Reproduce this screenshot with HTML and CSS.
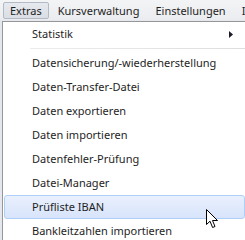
FILE: index.html
```html
<!DOCTYPE html>
<html lang="de">
<head>
    <meta charset="UTF-8">
    <title>Extras</title>
    <link rel="stylesheet" href="styles.css">
</head>
<body>
    <div class="menubar">
        <span class="bar-item active">Extras</span>
        <span class="bar-item">Kursverwaltung</span>
        <span class="bar-item">Einstellungen</span>
        <span class="bar-item">I</span>
    </div>

    <div class="dropdown">
        <div class="item sub">Statistik
            <svg class="arrow" width="4" height="7" viewBox="0 0 4 7"><path d="M0 0 L4 3.5 L0 7 Z" fill="#1b1b2a"/></svg>
        </div>
        <div class="sep"></div>
        <div class="item">Datensicherung/-wiederherstellung</div>
        <div class="item">Daten-Transfer-Datei</div>
        <div class="item">Daten exportieren</div>
        <div class="item">Daten importieren</div>
        <div class="item">Datenfehler-Prüfung</div>
        <div class="item">Datei-Manager</div>
        <div class="item hover">Prüfliste IBAN
            <svg class="cursor" width="13" height="20" viewBox="0 0 13 20">
                <path d="M0.5 0.5 L0.5 15.5 L4 12.2 L6.6 18.5 L9 17.5 L6.5 11.5 L11.5 11.5 Z" fill="#fff" stroke="#000" stroke-width="1"/>
            </svg>
        </div>
        <div class="item">Bankleitzahlen importieren</div>
    </div>
</body>
</html>
```
FILE: styles.css
```css
* {
    box-sizing: border-box;
}

body {
    margin: 0;
    height: 240px;
    background-color: #e4e8ee;
    font-family: "Noto Sans", "Open Sans", sans-serif;
    font-size: 11px;
    color: #1e1e1e;
    overflow: hidden;
}

.menubar {
    height: 20px;
    display: flex;
    align-items: center;
    padding-left: 3px;
    background: linear-gradient(#f3f4f6, #eaecef);
    white-space: nowrap;
    overflow: hidden;
}

.bar-item {
    height: 17px;
    line-height: 15px;
    padding: 0 6px;
    margin-right: 2px;
    border: 1px solid transparent;
    border-radius: 2px;
}

.bar-item.active {
    background: linear-gradient(#e6e9ee, #dadee5);
    border-color: #b4bac4;
}

.dropdown {
    margin: 1px 0 0 2px;
    background-color: #fff;
    border-left: 1px solid #979797;
    border-top: 1px solid #979797;
    padding: 0 0 0 1px;
    height: 219px;
    overflow: hidden;
}

.item {
    position: relative;
    height: 24px;
    line-height: 22px;
    padding-left: 27px;
    border: 1px solid transparent;
    border-radius: 3px;
    white-space: nowrap;
}

.sep {
    height: 1px;
    margin: 2px 0 2px 26px;
    background: linear-gradient(to right, #ececec, #dedede);
}

.arrow {
    position: absolute;
    right: 11px;
    top: 8px;
}

.item.hover {
    background: linear-gradient(#e9f0fd, #d8e4fb);
    border-color: #aecff7;
}

.cursor {
    position: absolute;
    left: 201px;
    top: 13px;
}
```
